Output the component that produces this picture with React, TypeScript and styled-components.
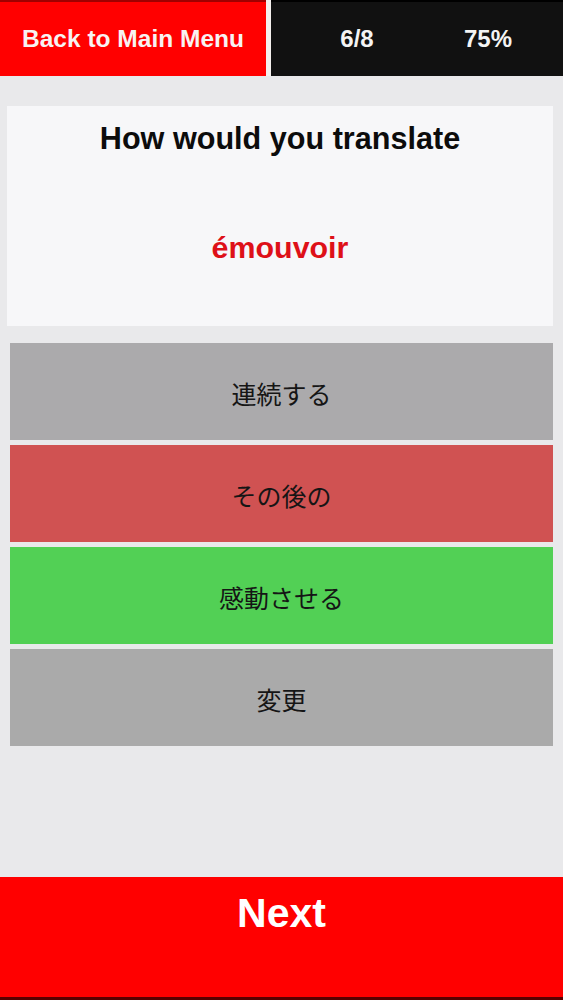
import React from "react";
import styled, { createGlobalStyle } from "styled-components";

const GlobalStyle = createGlobalStyle`
  html, body {
    margin: 0;
    padding: 0;
    background: #e9e9eb;
  }
  #root {
    min-height: 100vh;
  }
`;

const Page = styled.div`
  display: flex;
  flex-direction: column;
  min-height: 1000px;
  background: #e9e9eb;
  font-family: "Liberation Sans", Arial, sans-serif;
`;

const TopBar = styled.header`
  display: flex;
  height: 76px;
  box-sizing: border-box;
  background: #f4f0ee;
`;

const BackButton = styled.button`
  width: 266px;
  flex: none;
  border: none;
  border-top: 2px solid #a00000;
  margin: 0 5px 0 0;
  padding: 0;
  background: #ff0000;
  color: #f8f2f2;
  font-family: "Liberation Sans", Arial, sans-serif;
  font-weight: 700;
  font-size: 24.5px;
  line-height: 1;
  cursor: pointer;
`;

const Stats = styled.div`
  flex: 1;
  display: grid;
  grid-template-columns: 172px 90px;
  align-items: center;
  background: #111111;
  border-top: 2px solid #000;
`;

const Stat = styled.span`
  text-align: center;
  color: #f4f4f4;
  font-weight: 700;
  font-size: 24px;
  line-height: 1;
`;

const Card = styled.section`
  margin: 30px 10px 0 7px;
  background: #f7f7f9;
  padding: 17px 0 64px;
  display: flex;
  flex-direction: column;
  align-items: center;
`;

const Question = styled.h1`
  margin: 0;
  font-size: 30.6px;
  line-height: 1;
  font-weight: 700;
  color: #0c0c0c;
`;

const Word = styled.div`
  margin-top: 78px;
  font-size: 30.4px;
  line-height: 1;
  font-weight: 700;
  color: #de1018;
`;

const Options = styled.div`
  display: flex;
  flex-direction: column;
  gap: 5px;
  margin: 17px 10px 0 10px;
`;

const Option = styled.button<{ $bg: string }>`
  height: 97px;
  border: none;
  margin: 0;
  padding: 3px 0 0;
  background: ${(p) => p.$bg};
  color: #151515;
  font-family: "Noto Sans CJK JP", "Noto Sans", sans-serif;
  font-weight: 400;
  font-size: 25px;
  display: flex;
  align-items: center;
  justify-content: center;
  cursor: pointer;
`;

const NextButton = styled.button`
  margin-top: auto;
  height: 123px;
  border: none;
  border-bottom: 3px solid #5a0000;
  padding: 16px 0 0;
  background: #ff0000;
  color: #ffffff;
  font-family: "Liberation Sans", Arial, sans-serif;
  font-weight: 700;
  font-size: 41px;
  line-height: 1;
  display: flex;
  justify-content: center;
  align-items: flex-start;
  cursor: pointer;
`;

const options = [
  { label: "連続する", bg: "#abaaac" },
  { label: "その後の", bg: "#d05252" },
  { label: "感動させる", bg: "#52d055" },
  { label: "変更", bg: "#aaaaaa" },
];

export default function App() {
  return (
    <>
      <GlobalStyle />
      <Page>
        <TopBar>
          <BackButton>Back to Main Menu</BackButton>
          <Stats>
            <Stat>6/8</Stat>
            <Stat>75%</Stat>
          </Stats>
        </TopBar>
        <Card>
          <Question>How would you translate</Question>
          <Word>émouvoir</Word>
        </Card>
        <Options>
          {options.map((o) => (
            <Option key={o.label} $bg={o.bg}>
              {o.label}
            </Option>
          ))}
        </Options>
        <NextButton>Next</NextButton>
      </Page>
    </>
  );
}
